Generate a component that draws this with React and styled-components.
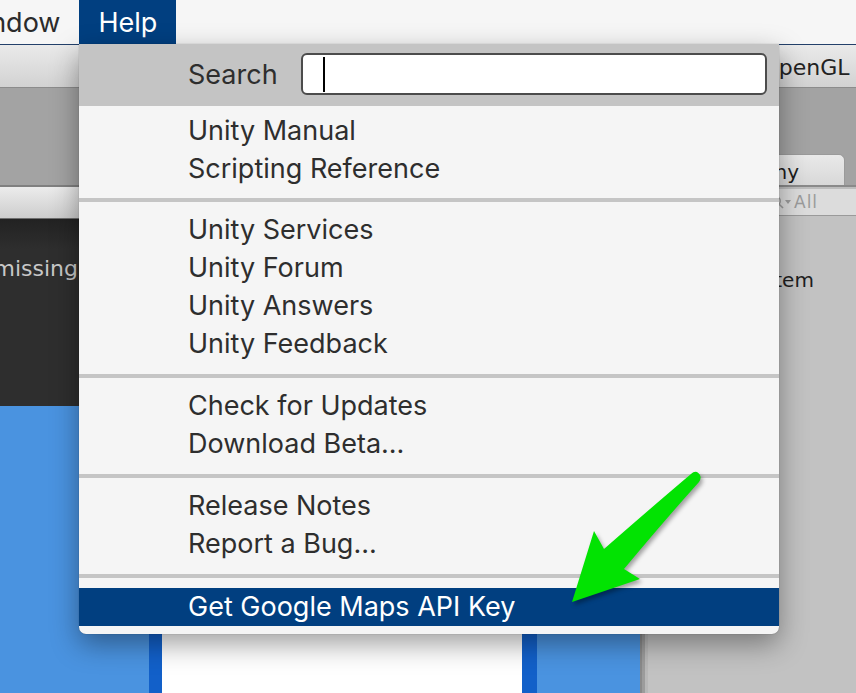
import React from "react";
import styled, { createGlobalStyle } from "styled-components";

const GlobalStyle = createGlobalStyle`
  html, body {
    margin: 0;
    padding: 0;
    background: #f6f6f6;
  }
  body {
    font-family: Inter, "Liberation Sans", sans-serif;
  }
`;

const helpGroups = [
  { pad: "6px 0 10px", items: ["Unity Manual", "Scripting Reference"] },
  {
    pad: "9px 0 11px",
    items: ["Unity Services", "Unity Forum", "Unity Answers", "Unity Feedback"],
  },
  { pad: "9px 0 11px", items: ["Check for Updates", "Download Beta..."] },
  { pad: "9px 0 11px", items: ["Release Notes", "Report a Bug..."] },
  { pad: "10px 0 8px", items: ["Get Google Maps API Key"], active: 0 },
];

const App = () => {
  return (
    <>
      <GlobalStyle />
      <Screen>
        <MenuBar>
          <MenuTitle $offset={-62}>Window</MenuTitle>
          <MenuTitle $active>Help</MenuTitle>
        </MenuBar>

        <Editor>
          <Toolbar>
            <TitleText>&lt;OpenGL 4.1&gt;</TitleText>
          </Toolbar>

          <Dock>
            <SceneColumn>
              <EmptyStrip />
              <PanelToolbar />
              <ConsoleArea>
                <MissingText>
                  <span>The referenced script is missing</span>
                </MissingText>
              </ConsoleArea>
              <GameView>
                <ViewEdge $w={13} />
                <Viewport />
                <ViewEdge $w={15} />
              </GameView>
            </SceneColumn>

            <Splitter />

            <HierarchyColumn>
              <TabStrip>
                <Tab>Hierarchy</Tab>
              </TabStrip>
              <SearchRow>
                <SearchField>
                  <svg width="14" height="14" viewBox="0 0 14 14">
                    <circle
                      cx="6"
                      cy="6"
                      r="4.3"
                      fill="none"
                      stroke="#9b9b9b"
                      strokeWidth="1.4"
                    />
                    <line
                      x1="9.2"
                      y1="9.2"
                      x2="13"
                      y2="13"
                      stroke="#9b9b9b"
                      strokeWidth="1.6"
                    />
                  </svg>
                  <svg width="6" height="6" viewBox="0 0 6 6">
                    <path d="M0 1 L6 1 L3 5 Z" fill="#9b9b9b" />
                  </svg>
                  <span>All</span>
                </SearchField>
              </SearchRow>
              <HierarchyList>
                <HierarchyItem>EventSystem</HierarchyItem>
              </HierarchyList>
            </HierarchyColumn>
          </Dock>
        </Editor>

        <HelpMenu>
          <MenuSearch>
            <SearchLabel>Search</SearchLabel>
            <SearchInput>
              <Caret />
            </SearchInput>
          </MenuSearch>
          {helpGroups.map((group, g) => (
            <React.Fragment key={g}>
              {g > 0 && <Separator />}
              <Group $pad={group.pad}>
                {group.items.map((label, i) => (
                  <Item key={label} $active={group.active === i}>
                    {label}
                  </Item>
                ))}
              </Group>
            </React.Fragment>
          ))}
        </HelpMenu>

        <Pointer viewBox="560 460 150 150" width="150" height="150">
          <path
            d="M 691 474 Q 652 507 604 549 L 594 531 L 572 602 L 640 579 L 624 569 Q 664 521 699 482 Q 703 476 697 472 Q 694 471 691 474 Z"
            fill="#02e302"
          />
        </Pointer>
      </Screen>
    </>
  );
};

export default App;

const Screen = styled.div`
  position: relative;
  width: 856px;
  height: 693px;
  overflow: hidden;
  display: flex;
  flex-direction: column;
`;

const MenuBar = styled.div`
  height: 44px;
  flex: none;
  display: flex;
  background: #f6f6f6;
  font-size: 27px;
`;

const MenuTitle = styled.div`
  display: flex;
  align-items: center;
  padding: 0 19px;
  margin-left: ${(p) => p.$offset || 0}px;
  background: ${(p) => (p.$active ? "#013f80" : "transparent")};
  color: ${(p) => (p.$active ? "#ffffff" : "#2b2b2b")};
`;

const Editor = styled.div`
  flex: 1;
  min-height: 0;
  display: flex;
  flex-direction: column;
  border-top: 1px solid #23406a;
  font-family: "DejaVu Sans", "Liberation Sans", sans-serif;
`;

const Toolbar = styled.div`
  height: 42px;
  flex: none;
  display: flex;
  align-items: center;
  background: linear-gradient(#eaeaea, #d2d2d2);
  border-bottom: 1px solid #8c8c8c;
  font-size: 22px;
  color: #222;
  white-space: nowrap;
  overflow: hidden;
`;

const TitleText = styled.span`
  margin-left: 743px;
  padding-top: 2px;
`;

const Dock = styled.div`
  flex: 1;
  min-height: 0;
  display: flex;
  background: #a3a3a3;
`;

const SceneColumn = styled.div`
  width: 640px;
  flex: none;
  display: flex;
  flex-direction: column;
`;

const EmptyStrip = styled.div`
  height: 97px;
  flex: none;
  border-bottom: 2px solid #808080;
`;

const PanelToolbar = styled.div`
  height: 31px;
  flex: none;
  background: linear-gradient(#ececec, #cdcdcd);
  border-bottom: 1px solid #6e6e6e;
`;

const ConsoleArea = styled.div`
  height: 187px;
  flex: none;
  padding-top: 36px;
  box-sizing: border-box;
  background: linear-gradient(#222222, #2e2e2e 30px);
`;

const MissingText = styled.div`
  width: 78px;
  display: flex;
  justify-content: flex-end;
  white-space: nowrap;
  font-size: 22px;
  line-height: 28px;
  color: #c8c8c8;
`;

const GameView = styled.div`
  flex: 1;
  display: flex;
  padding-left: 149px;
  background: #4a93e0;
`;

const ViewEdge = styled.div`
  width: ${(p) => p.$w}px;
  background: #1260c9;
`;

const Viewport = styled.div`
  width: 360px;
  background: #ffffff;
`;

const Splitter = styled.div`
  width: 8px;
  flex: none;
  background: linear-gradient(
    to right,
    #8a8a8a 0 2px,
    #9c9c9c 2px 5px,
    #b8b8b8 5px
  );
`;

const HierarchyColumn = styled.div`
  flex: 1;
  display: flex;
  flex-direction: column;
`;

const TabStrip = styled.div`
  height: 99px;
  flex: none;
  display: flex;
  align-items: flex-end;
  justify-content: flex-end;
  padding-right: 11px;
  box-sizing: border-box;
  border-bottom: 2px solid #8a8a8a;
`;

const Tab = styled.div`
  height: 31px;
  box-sizing: border-box;
  display: flex;
  align-items: center;
  padding: 3px 45px 0 30px;
  background: linear-gradient(#e9e9e9, #d8d8d8);
  border: 1px solid #9a9a9a;
  border-bottom: none;
  border-radius: 6px 6px 0 0;
  font-size: 20px;
  color: #1d1d1d;
`;

const SearchRow = styled.div`
  height: 26px;
  flex: none;
  display: flex;
  align-items: center;
  border-top: 2px solid #bdbdbd;
  border-bottom: 1px solid #9a9a9a;
  background: #dcdcdc;
`;

const SearchField = styled.div`
  margin-left: 122px;
  display: flex;
  align-items: center;
  gap: 1px;
  font-size: 17px;
  letter-spacing: 1px;
  color: #9b9b9b;

  span {
    margin-left: 2px;
  }
`;

const HierarchyList = styled.div`
  flex: 1;
  padding: 54px 0 0 34px;
  background: #c2c2c2;
`;

const HierarchyItem = styled.div`
  height: 20px;
  line-height: 20px;
  font-size: 20px;
  color: #1e1e1e;
  white-space: nowrap;
`;

const HelpMenu = styled.div`
  position: absolute;
  top: 44px;
  left: 79px;
  width: 700px;
  background: #f5f5f5;
  border-radius: 0 0 7px 7px;
  overflow: hidden;
  box-shadow: 0 0 1px rgba(0, 0, 0, 0.45), 0 10px 28px rgba(0, 0, 0, 0.38);
  font-size: 27px;
  color: #2e2e2e;
`;

const MenuSearch = styled.div`
  display: flex;
  align-items: center;
  padding: 9px 12px 11px 109px;
  background: #c4c4c4;
`;

const SearchLabel = styled.div`
  flex: 1;
`;

const SearchInput = styled.div`
  width: 466px;
  height: 42px;
  box-sizing: border-box;
  display: flex;
  align-items: center;
  padding-left: 20px;
  background: #ffffff;
  border: 2px solid #4c4c4c;
  border-radius: 6px;
`;

const Caret = styled.div`
  width: 2px;
  height: 35px;
  background: #000;
`;

const Group = styled.div`
  padding: ${(p) => p.$pad};
`;

const Separator = styled.div`
  height: 4px;
  background: #c5c5c5;
`;

const Item = styled.div`
  height: 38px;
  line-height: 38px;
  padding-left: 109px;
  white-space: nowrap;
  background: ${(p) => (p.$active ? "#013f80" : "transparent")};
  color: ${(p) => (p.$active ? "#ffffff" : "inherit")};
`;

const Pointer = styled.svg`
  position: absolute;
  left: 560px;
  top: 460px;
  overflow: visible;
  filter: drop-shadow(2px 3px 2px rgba(0, 0, 0, 0.35));
`;
